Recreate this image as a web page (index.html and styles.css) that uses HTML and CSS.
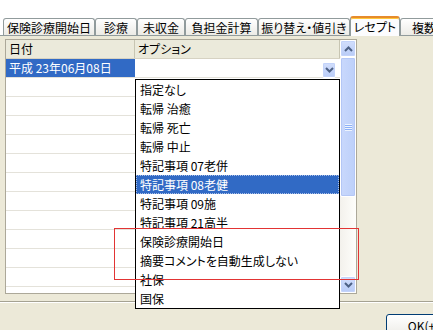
FILE: index.html
```html
<!DOCTYPE html>
<html lang="ja">
<head>
<meta charset="utf-8">
<title>レセプト</title>
<link rel="stylesheet" href="styles.css">
</head>
<body>
<div class="window">
  <div class="topbar"></div>
  <div class="tabs">
    <div class="tab">保険診療開始日</div>
    <div class="tab">診療</div>
    <div class="tab">未収金</div>
    <div class="tab">負担金計算</div>
    <div class="tab">振り替え・値引き</div>
    <div class="tab active">レセプト</div>
    <div class="tab">複数日</div>
  </div>
  <div class="panel">
    <div class="grid">
      <div class="grid-body">
        <div class="row header"><div class="cell c1">日付</div><div class="cell c2">オプション</div></div>
        <div class="row"><div class="cell c1 selected">平成 23年06月08日</div><div class="cell c2 combo"><span class="xpbtn combo-btn"><svg width="9" height="6" viewBox="0 0 9 6"><path d="M1 1 L4.5 4.5 L8 1" fill="none" stroke="#4D6185" stroke-width="2"/></svg></span></div></div>
        <div class="row"><div class="cell c1"></div><div class="cell c2"></div></div>
        <div class="row"><div class="cell c1"></div><div class="cell c2"></div></div>
        <div class="row"><div class="cell c1"></div><div class="cell c2"></div></div>
        <div class="row"><div class="cell c1"></div><div class="cell c2"></div></div>
        <div class="row"><div class="cell c1"></div><div class="cell c2"></div></div>
        <div class="row"><div class="cell c1"></div><div class="cell c2"></div></div>
        <div class="row"><div class="cell c1"></div><div class="cell c2"></div></div>
        <div class="row"><div class="cell c1"></div><div class="cell c2"></div></div>
        <div class="row"><div class="cell c1"></div><div class="cell c2"></div></div>
        <div class="row"><div class="cell c1"></div><div class="cell c2"></div></div>
        <div class="row"><div class="cell c1"></div><div class="cell c2"></div></div>
        <div class="row"><div class="cell c1"></div><div class="cell c2"></div></div>
      </div>
      <div class="vscroll">
        <div class="xpbtn sbtn"><svg width="9" height="6" viewBox="0 0 9 6"><path d="M1 5 L4.5 1.5 L8 5" fill="none" stroke="#4D6185" stroke-width="2"/></svg></div>
        <div class="thumb"><span class="grip"></span></div>
        <div class="track"></div>
        <div class="xpbtn sbtn"><svg width="9" height="6" viewBox="0 0 9 6"><path d="M1 1 L4.5 4.5 L8 1" fill="none" stroke="#4D6185" stroke-width="2"/></svg></div>
      </div>
    </div>
  </div>
  <div class="footer"><button class="ok">OK(<u>+</u>)</button></div>

  <ul class="droplist">
    <li>指定なし</li>
    <li>転帰 治癒</li>
    <li>転帰 死亡</li>
    <li>転帰 中止</li>
    <li>特記事項 07老併</li>
    <li class="current">特記事項 08老健</li>
    <li>特記事項 09施</li>
    <li>特記事項 21高半</li>
    <li>保険診療開始日</li>
    <li>摘要コメントを自動生成しない</li>
    <li>社保</li>
    <li>国保</li>
  </ul>
  <div class="mark"></div>
</div>
</body>
</html>
```

FILE: styles.css
```css
* { box-sizing: border-box; }
html, body { margin: 0; padding: 0; }
body {
  background: #fff;
  font-family: "Noto Sans CJK JP", "Noto Sans", sans-serif;
  font-size: 12px;
  color: #000;
  font-feature-settings: "palt";
}
.window {
  position: relative;
  width: 433px;
  height: 330px;
  overflow: hidden;
  background: #ECE9D8;
}
.topbar { height: 16px; background: #fff; }

.tabs {
  display: grid;
  grid-template-columns: 92px 42px 48px 73px 92px 50px 60px;
  align-items: end;
  height: 19px;
  padding-left: 3px;
  background: #fff;
  position: relative;
  z-index: 1;
}
.tab {
  height: 17px;
  border: 1px solid #919B9C;
  border-bottom: none;
  border-radius: 3px 3px 0 0;
  background: linear-gradient(#FFFFFF, #ECEBE6);
  display: flex;
  align-items: center;
  justify-content: center;
  white-space: nowrap;
  overflow: hidden;
  line-height: 1;
  padding-top: 1px;
}
.tab.active {
  height: 20px;
  margin-bottom: -1px;
  background: #FCFCFE;
  border-top: 2px solid #E68B2C;
  box-shadow: inset 0 1px 0 #FFC83C;
  padding-top: 0;
}

.panel {
  height: 267px;
  border-top: 1px solid #919B9C;
  border-bottom: 1px solid #A5A292;
  padding: 3px 0 0 5px;
  background: #ECE9D8;
}
.grid {
  display: flex;
  width: 352px;
  height: 255px;
  border: 1px solid #ACA899;
  background: #fff;
}
.grid-body {
  flex: 1;
  overflow: hidden;
  background: #fff;
}
.row {
  display: flex;
  height: 19px;
  border-bottom: 1px solid #E4E2DA;
}
.cell {
  height: 18px;
  line-height: 18px;
  padding-left: 3px;
  white-space: nowrap;
}
.c1 { width: 129px; }
.c2 { flex: 1; }
.header {
  background: #EBEADB;
  border-bottom: 1px solid #D6D2C2;
}
.header .c1 { border-right: 1px solid #C7C5B2; }
.header .c2 { border-right: 1px solid #C7C5B2; }
.selected { background: #316AC5; color: #fff; }
.combo {
  display: flex;
  justify-content: flex-end;
  padding-right: 4px;
  padding-top: 3px;
}

.xpbtn {
  display: flex;
  align-items: center;
  justify-content: center;
  background: linear-gradient(#D2DEFC, #B9CCF7);
  border: 1px solid #FFFFFF;
  border-radius: 2px;
  box-shadow: inset 0 0 0 1px #C3D3FA;
}
.combo-btn { width: 14px; height: 16px; }

.vscroll {
  width: 16px;
  display: flex;
  flex-direction: column;
  background: linear-gradient(90deg, #F3F1EC, #FEFEFB);
}
.sbtn { height: 17px; }
.thumb {
  height: 140px;
  background: linear-gradient(90deg, #C9D8FC, #BDD0FA);
  border: 1px solid #FFFFFF;
  border-radius: 2px;
  box-shadow: inset 0 0 0 1px #B4C7F6;
  display: flex;
  align-items: center;
  justify-content: center;
}
.grip {
  width: 7px;
  height: 7px;
  background: repeating-linear-gradient(#EEF4FE 0 1px, #8CB0F8 1px 2px);
}
.track { flex: 1; }

.footer {
  display: flex;
  height: 28px;
  border-top: 1px solid #FFFFFF;
  padding: 11px 0 0 386px;
}
.ok {
  flex-shrink: 0;
  width: 75px;
  height: 23px;
  border: 1px solid #003C74;
  border-radius: 3px;
  background: linear-gradient(#FFFFFF, #ECEBE6);
  font: inherit;
  color: #000;
  padding: 0;
}

.droplist {
  position: absolute;
  left: 135px;
  top: 79px;
  width: 205px;
  margin: 0;
  padding: 0;
  list-style: none;
  background: #fff;
  border: 1px solid #000;
  z-index: 2;
}
.droplist li {
  height: 19px;
  line-height: 19px;
  padding-left: 4px;
  white-space: nowrap;
}
.droplist li.current {
  background: #316AC5;
  color: #fff;
  outline: 1px dotted #A9BEE6;
  outline-offset: -1px;
}
.mark {
  position: absolute;
  left: 114px;
  top: 228px;
  width: 245px;
  height: 52px;
  border: 1px solid #E23434;
  z-index: 3;
}
```
